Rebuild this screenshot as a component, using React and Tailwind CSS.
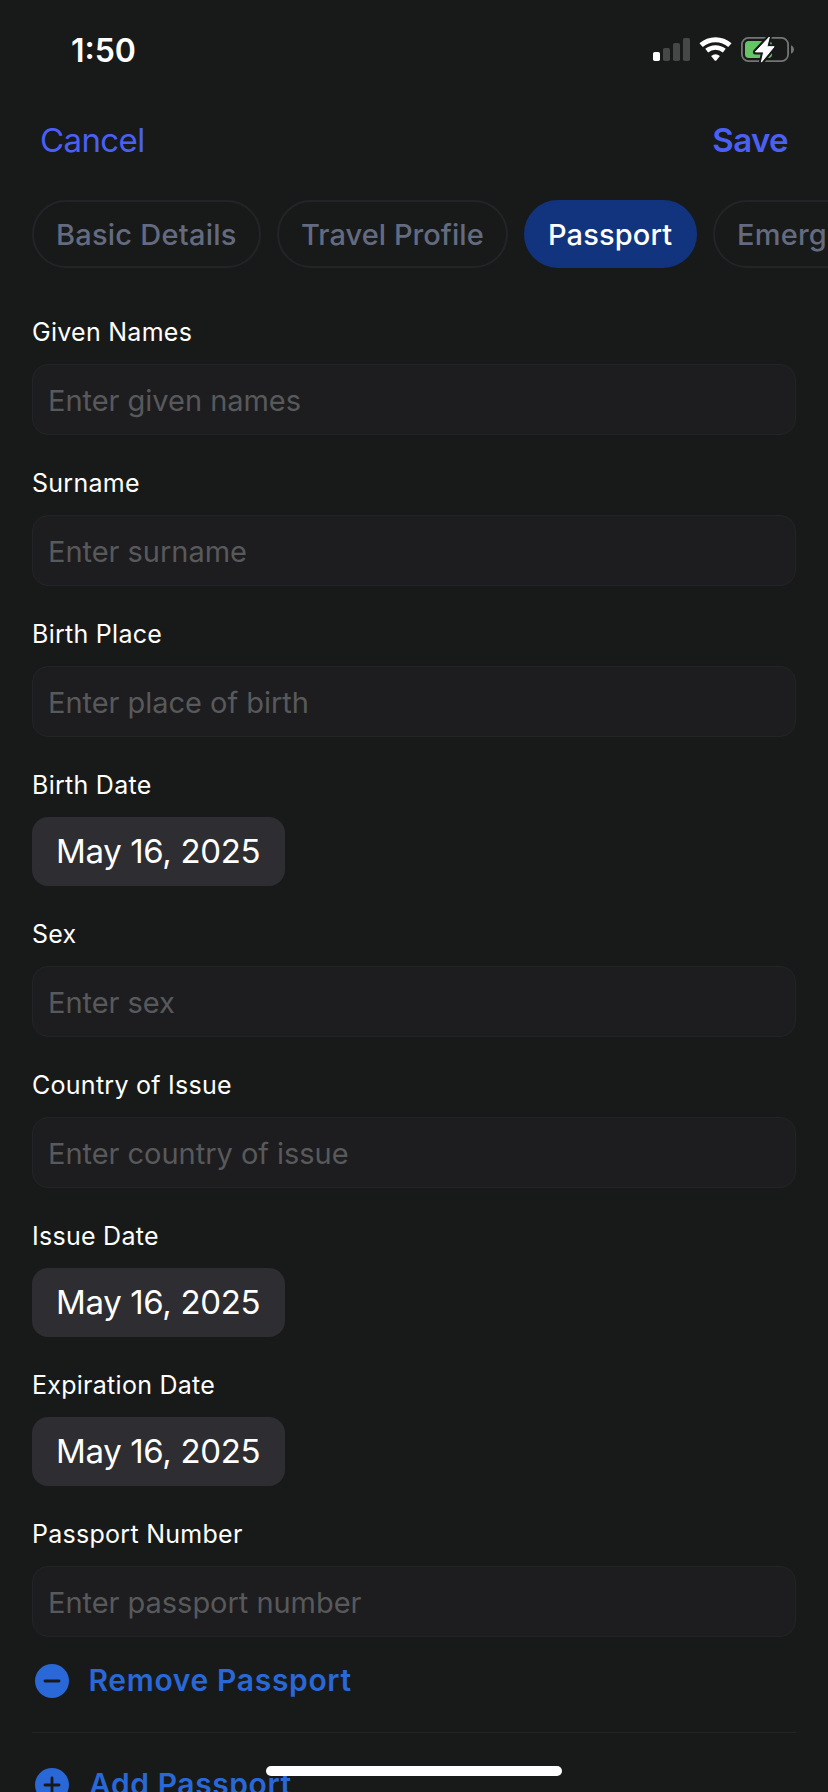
const tabs = [
  { label: 'Basic Details', box: 'w-[229px] border-[#232428] text-[#646b80]', text: 'tracking-[0.23px]' },
  { label: 'Travel Profile', box: 'w-[231px] border-[#232428] text-[#646b80]', text: 'tracking-[0.05px]' },
  { label: 'Passport', box: 'w-[173px] border-[#12337d] bg-[#12337d] text-white', text: 'tracking-[0.13px]' },
  { label: 'Emergency', box: 'w-[210px] border-[#232428] text-[#646b80]', text: 'tracking-[0.2px]' },
];

const fields = [
  { label: 'Given Names', placeholder: 'Enter given names' },
  { label: 'Surname', placeholder: 'Enter surname' },
  { label: 'Birth Place', placeholder: 'Enter place of birth' },
  { label: 'Birth Date', date: 'May 16, 2025' },
  { label: 'Sex', placeholder: 'Enter sex' },
  { label: 'Country of Issue', placeholder: 'Enter country of issue' },
  { label: 'Issue Date', date: 'May 16, 2025' },
  { label: 'Expiration Date', date: 'May 16, 2025' },
  { label: 'Passport Number', placeholder: 'Enter passport number' },
];

function SignalIcon() {
  return (
    <svg width="37" height="24" viewBox="0 0 37 24">
      <rect x="0" y="15" width="7" height="9" rx="1.8" fill="#fff" />
      <rect x="10" y="11" width="7" height="13" rx="1.8" fill="#464747" />
      <rect x="20" y="6" width="7" height="18" rx="1.8" fill="#464747" />
      <rect x="30" y="1" width="7" height="23" rx="1.8" fill="#464747" />
    </svg>
  );
}

function WifiIcon() {
  return (
    <svg width="33" height="25" viewBox="0 0 33 25" fill="none">
      <path d="M2.1 8.1a21.7 21.7 0 0 1 28.8 0" stroke="#fff" strokeWidth="5" />
      <path d="M7.7 13.6a14 14 0 0 1 17.6 0" stroke="#fff" strokeWidth="4.6" />
      <path d="M12.1 19a7.2 7.2 0 0 1 8.8 0l-3.6 4.4q-.8.8-1.6 0z" fill="#fff" />
    </svg>
  );
}

function BatteryIcon() {
  const bolt = 'M28.3 1.1 25.9 10.7H33.1L20.4 26.1 22.7 15.9H14.4Z';
  return (
    <svg width="54" height="27" viewBox="0 0 54 27" fill="none">
      <rect x="0.9" y="1.9" width="46.2" height="23.2" rx="6.6" stroke="#737574" strokeWidth="1.8" />
      <path d="M50 9.3c3.9 1.2 3.9 7.2 0 8.4z" fill="#737574" />
      <rect x="4" y="5" width="27" height="17" rx="3.8" fill="#65c466" />
      <path d={bolt} fill="#181a19" stroke="#181a19" strokeWidth="5" strokeLinejoin="round" />
      <path d={bolt} fill="#fff" stroke="#fff" strokeWidth="1" strokeLinejoin="round" />
    </svg>
  );
}

function CircleIcon({ plus }) {
  return (
    <svg width="34" height="34" viewBox="0 0 34 34" className="shrink-0">
      <circle cx="17" cy="17" r="17" fill="#2968d6" />
      <path d={plus ? 'M10 17h14M17 10v14' : 'M10 17h14'} stroke="#181a19" strokeWidth="2.8" strokeLinecap="round" />
    </svg>
  );
}

function Field({ label, placeholder, date }) {
  return (
    <div className="flex shrink-0 flex-col">
      <label className="h-16 text-[25px] leading-[64px] tracking-[0.27px] text-white">{label}</label>
      {date ? (
        <button className="flex h-[69px] w-[253px] items-center rounded-[16px] bg-[#2d2d32] pl-6 text-[33px] tracking-[-0.35px] text-white">
          {date}
        </button>
      ) : (
        <div className="flex h-[71px] items-center rounded-[16px] border border-[#222428] bg-[#1d1d1f] pt-0.5 pl-[15px] text-[29px] tracking-[-0.03px] text-[#58595b]">
          {placeholder}
        </div>
      )}
    </div>
  );
}

export default function App() {
  return (
    <div className="relative flex h-[1792px] w-[828px] flex-col overflow-hidden bg-[#181a19] font-['Inter',sans-serif] whitespace-nowrap">
      <header className="flex h-[100px] shrink-0 items-start justify-between pr-[33px] pl-[71px]">
        <div className="pt-[31px] text-[32px] leading-[40px] font-semibold text-white">1:50</div>
        <div className="flex items-start pt-9">
          <div className="pt-px"><SignalIcon /></div>
          <div className="ml-[9px] pt-px"><WifiIcon /></div>
          <div className="ml-[9px]"><BatteryIcon /></div>
        </div>
      </header>

      <nav className="flex h-20 shrink-0 items-center justify-between pt-0.5 pr-10 pl-10 text-[33px] text-[#4a60f5]">
        <button className="tracking-[-0.6px]">Cancel</button>
        <button className="font-semibold tracking-[-0.6px]">Save</button>
      </nav>

      <div className="mt-5 flex shrink-0 gap-4 overflow-hidden pl-8">
        {tabs.map((t) => (
          <button key={t.label} className={`flex h-[68px] shrink-0 items-center rounded-full border-2 pt-0.5 pl-[22px] text-[29px] font-medium ${t.box}`}>
            <span className={t.text}>{t.label}</span>
          </button>
        ))}
      </div>

      <main className="mt-8 flex shrink-0 flex-col px-8">
        <div className="flex flex-col gap-4">
          {fields.map((f) => (
            <Field key={f.label} {...f} />
          ))}
        </div>

        <button className="mt-[22px] flex h-11 items-center gap-[19.5px] pl-[3px] text-[30px] font-semibold tracking-[0.66px] text-[#2968d6]">
          <CircleIcon />
          <span className="pb-0.5">Remove Passport</span>
        </button>
        <div className="mt-[29px] h-px bg-[#222428]" />
        <button className="mt-[30px] flex h-11 items-center gap-5 pl-[3px] text-[30px] font-semibold tracking-[0.58px] text-[#2968d6]">
          <CircleIcon plus />
          <span className="pb-0.5">Add Passport</span>
        </button>
      </main>

      <div className="absolute top-[1766px] left-[266px] h-2.5 w-[296px] rounded-full bg-white" />
    </div>
  );
}
